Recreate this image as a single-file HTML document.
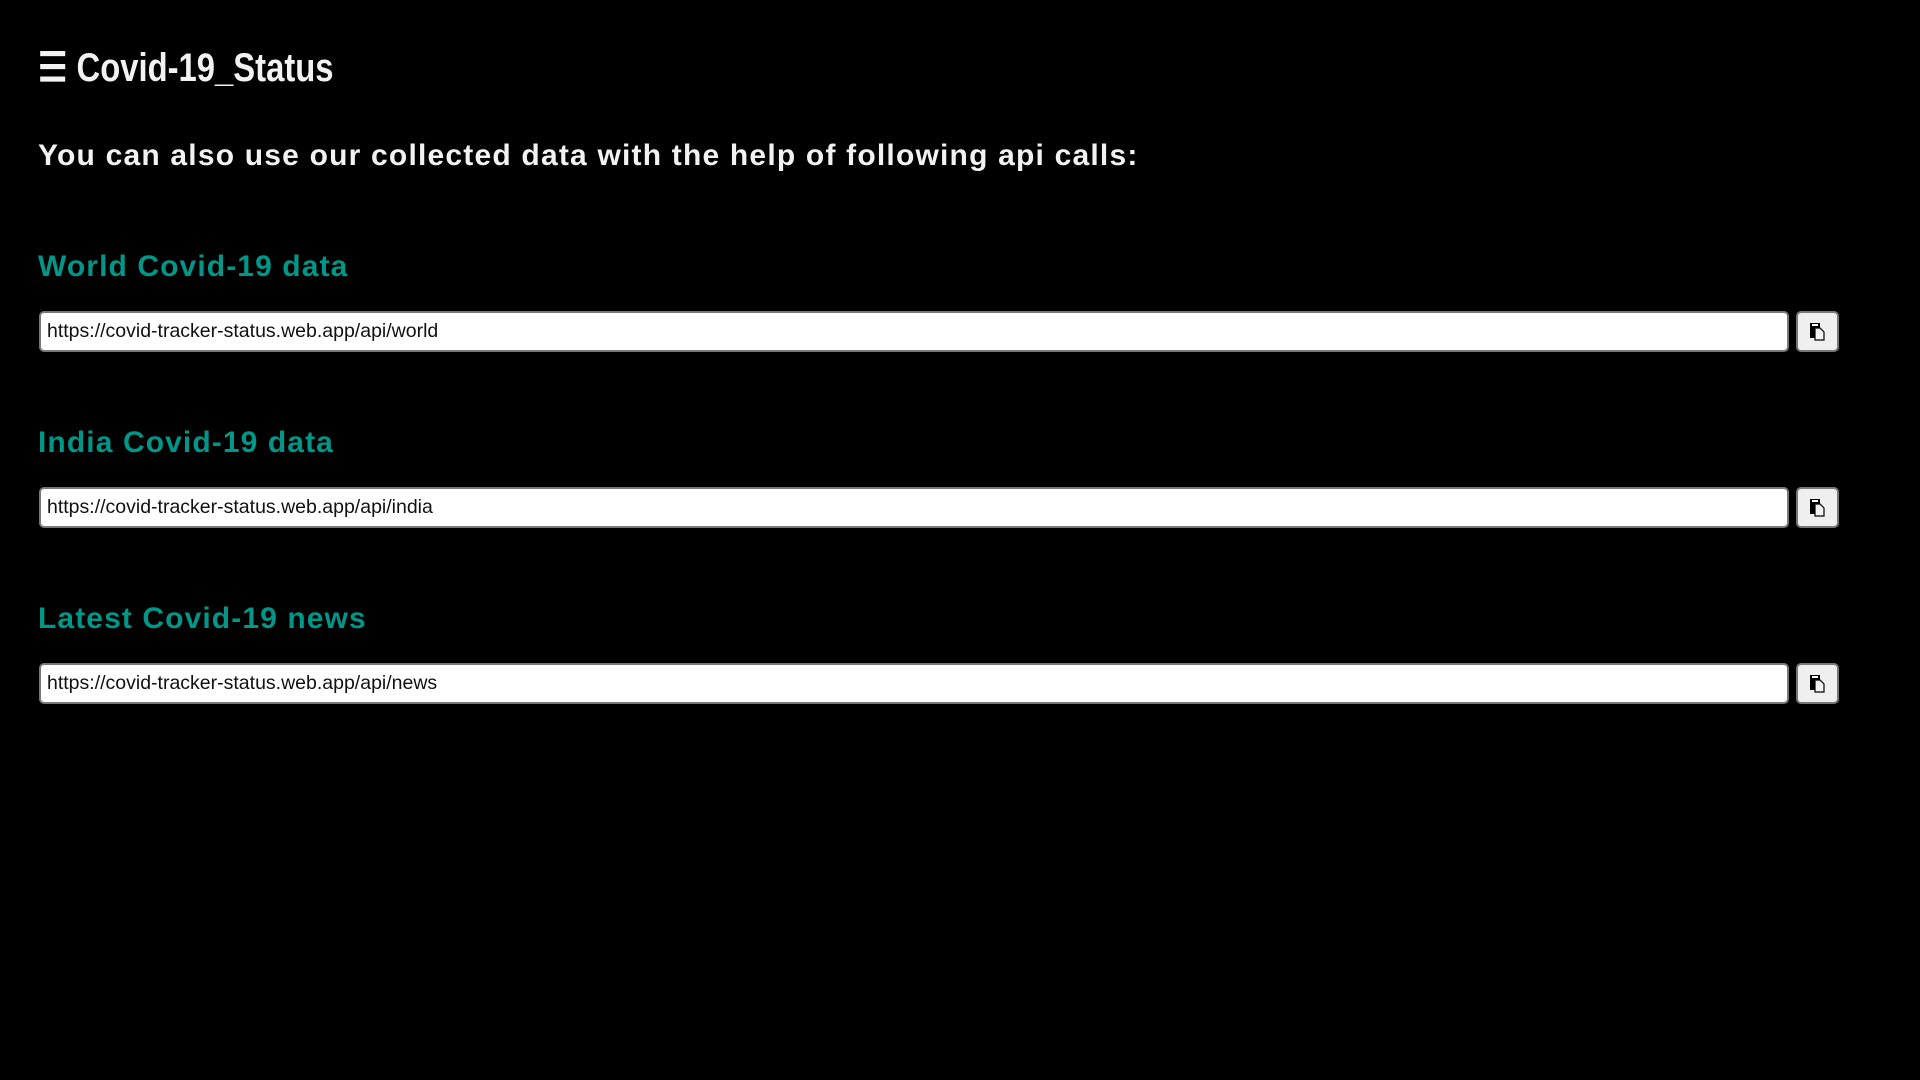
<!DOCTYPE html>
<html><head><style>
body{margin:0;background:#000;width:1920px;height:1080px;overflow:hidden;font-family:"Liberation Sans",sans-serif;position:relative}
.a{position:absolute;white-space:nowrap}
.title{left:38px;top:45px;font-size:40px;font-weight:bold;color:#f2f2f2;transform:scaleX(0.82);transform-origin:left}
.sub{left:38px;top:139px;font-size:30px;font-weight:bold;color:#f2f2f2;letter-spacing:1.2px}
.h{left:38px;font-size:30px;font-weight:bold;color:#009688;letter-spacing:1.1px}
.in{left:39px;height:37px;background:#fff;border:2px solid #777;border-radius:5px;box-sizing:content-box;font-size:19.5px;line-height:37px;padding-left:6px;color:#111;width:1740px}
.btn{left:1796px;width:39px;height:37px;background:#efefef;border:2px solid #777;border-radius:5px}
</style></head><body>
<div class="a title">☰ Covid-19_Status</div>
<div class="a sub">You can also use our collected data with the help of following api calls:</div>

<div class="a h" style="top:250px">World Covid-19 data</div>
<div class="a in" style="top:311px">https://covid-tracker-status.web.app/api/world</div>
<div class="a btn" style="top:311px"><svg width="39" height="37"><rect x="12" y="10" width="10" height="15" fill="#000"/><rect x="14" y="11" width="6" height="2" fill="#fff"/><path d="M17 15h5l4 4v8h-9z" fill="#f4f4f4" stroke="#000" stroke-width="1.2"/></svg></div>

<div class="a h" style="top:426px">India Covid-19 data</div>
<div class="a in" style="top:487px">https://covid-tracker-status.web.app/api/india</div>
<div class="a btn" style="top:487px"><svg width="39" height="37"><rect x="12" y="10" width="10" height="15" fill="#000"/><rect x="14" y="11" width="6" height="2" fill="#fff"/><path d="M17 15h5l4 4v8h-9z" fill="#f4f4f4" stroke="#000" stroke-width="1.2"/></svg></div>

<div class="a h" style="top:602px">Latest Covid-19 news</div>
<div class="a in" style="top:663px">https://covid-tracker-status.web.app/api/news</div>
<div class="a btn" style="top:663px"><svg width="39" height="37"><rect x="12" y="10" width="10" height="15" fill="#000"/><rect x="14" y="11" width="6" height="2" fill="#fff"/><path d="M17 15h5l4 4v8h-9z" fill="#f4f4f4" stroke="#000" stroke-width="1.2"/></svg></div>
</body></html>
